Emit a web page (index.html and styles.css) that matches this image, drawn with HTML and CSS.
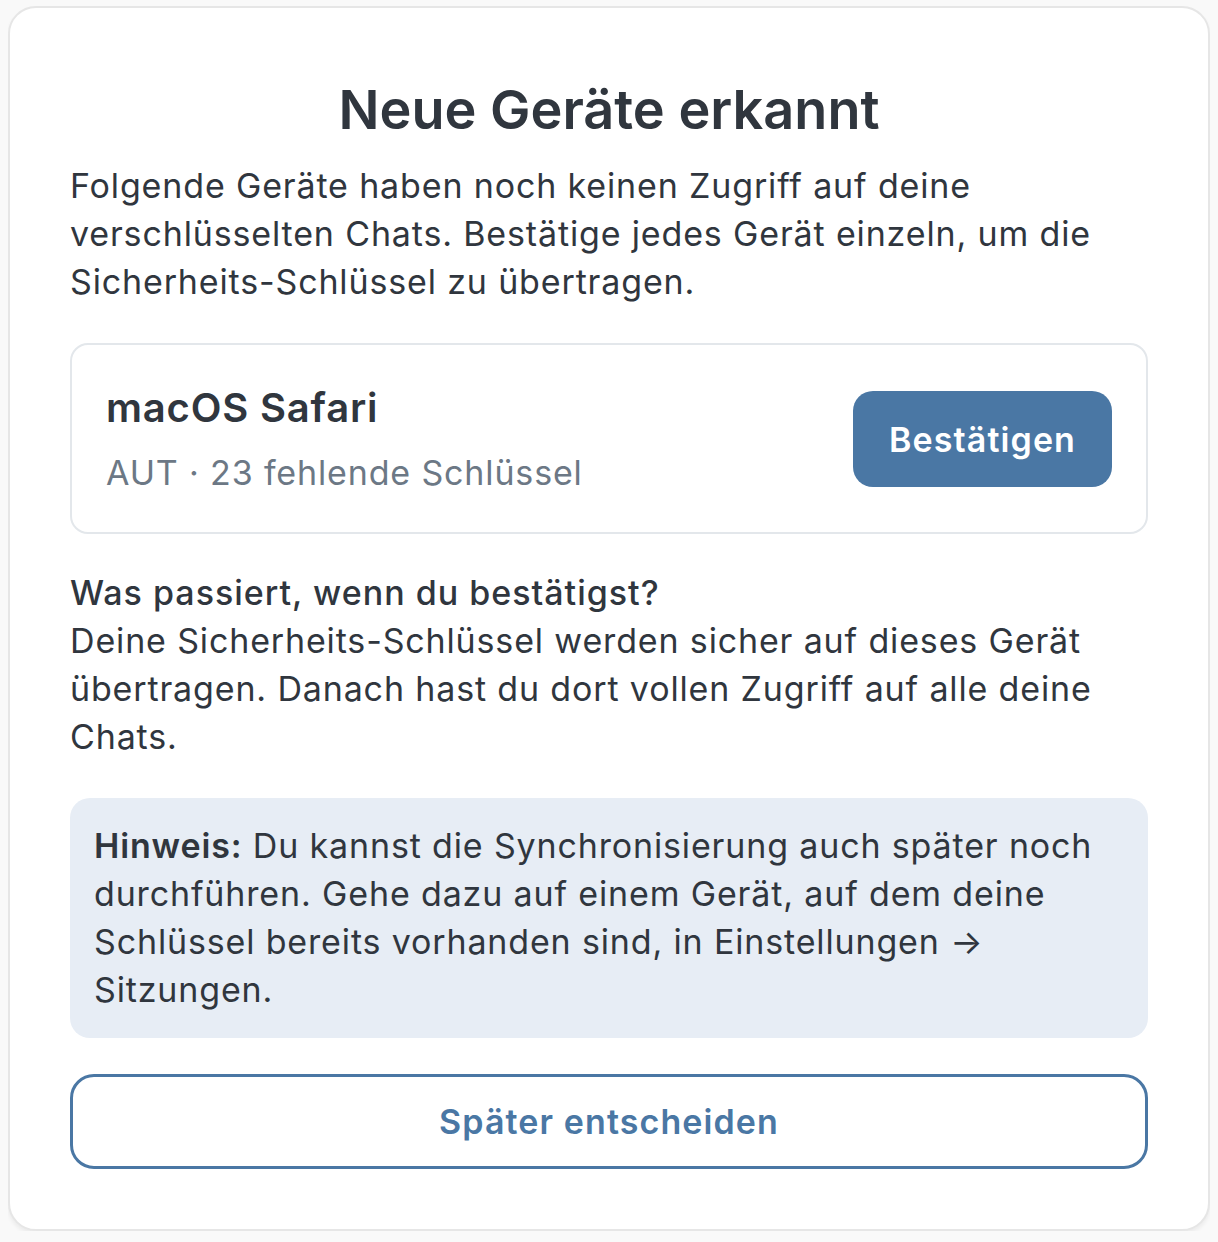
FILE: index.html
```html
<!DOCTYPE html>
<html lang="de">
<head>
    <meta charset="UTF-8">
    <title>Neue Geräte erkannt</title>
    <link rel="stylesheet" href="styles.css">
</head>
<body>
    <div class="dialog">
        <h1 class="dialog-title">Neue Geräte erkannt</h1>
        <p class="intro">
            Folgende Geräte haben noch keinen Zugriff auf deine verschlüsselten Chats.
            Bestätige jedes Gerät einzeln, um die Sicherheits-Schlüssel zu übertragen.
        </p>

        <div class="device-card">
            <div class="device-info">
                <div class="device-name">macOS Safari</div>
                <div class="device-meta">AUT · 23 fehlende Schlüssel</div>
            </div>
            <button class="btn btn-primary">Bestätigen</button>
        </div>

        <p class="explain">
            <span class="explain-title">Was passiert, wenn du bestätigst?</span><br>
            Deine Sicherheits-Schlüssel werden sicher auf dieses Gerät übertragen.
            Danach hast du dort vollen Zugriff auf alle deine Chats.
        </p>

        <div class="notice">
            <strong>Hinweis:</strong> Du kannst die Synchronisierung auch später noch
            durchführen. Gehe dazu auf einem Gerät, auf dem deine Schlüssel bereits
            vorhanden sind, in Einstellungen → Sitzungen.
        </div>

        <button class="btn btn-outline">Später entscheiden</button>
    </div>
</body>
</html>
```

FILE: styles.css
```css
body {
    margin: 6px 8px;
    background-color: #f9f9f9;
    font-family: Inter, "Noto Sans", sans-serif;
    color: #30363e;
}
.dialog {
    background-color: #fff;
    border: 2px solid #e6e6e6;
    border-radius: 28px;
    box-shadow: 0 3px 4px rgba(0,0,0,0.06);
    padding: 60px 60px 60px;
    display: flex;
    flex-direction: column;
}
.dialog-title {
    margin: 10px 0 20px;
    font-size: 54px;
    line-height: 64px;
    font-weight: 600;
    text-align: center;
}
.intro,
.explain,
.notice {
    margin: 0;
    font-size: 34px;
    line-height: 48px;
    letter-spacing: 0.85px;
}
.device-card {
    margin-top: 37px;
    border: 2px solid #e3e7eb;
    border-radius: 18px;
    padding: 39px 34px 35px;
    display: flex;
    align-items: center;
    justify-content: space-between;
}
.device-name {
    font-size: 40px;
    line-height: 48px;
    font-weight: 600;
    letter-spacing: 0.8px;
    margin-bottom: 17px;
}
.device-meta {
    font-size: 34px;
    line-height: 48px;
    letter-spacing: 0.85px;
    color: #6c7885;
}
.btn {
    font-family: inherit;
    font-size: 34px;
    font-weight: 600;
    letter-spacing: 1.1px;
    cursor: pointer;
}
.btn-primary {
    background-color: #4a77a4;
    color: #fff;
    border: none;
    border-radius: 20px;
    height: 96px;
    padding: 0 36px;
    margin-top: -3px;
}
.explain {
    margin-top: 35px;
}
.explain-title {
    font-weight: 500;
    letter-spacing: 1px;
}
.notice {
    margin-top: 37px;
    background-color: #e7edf5;
    border-radius: 20px;
    padding: 24px;
}
.notice strong {
    font-weight: 600;
}
.btn-outline {
    margin-top: 36px;
    height: 95px;
    background-color: #fff;
    color: #4a77a4;
    border: 3px solid #4a77a4;
    border-radius: 24px;
}
```
